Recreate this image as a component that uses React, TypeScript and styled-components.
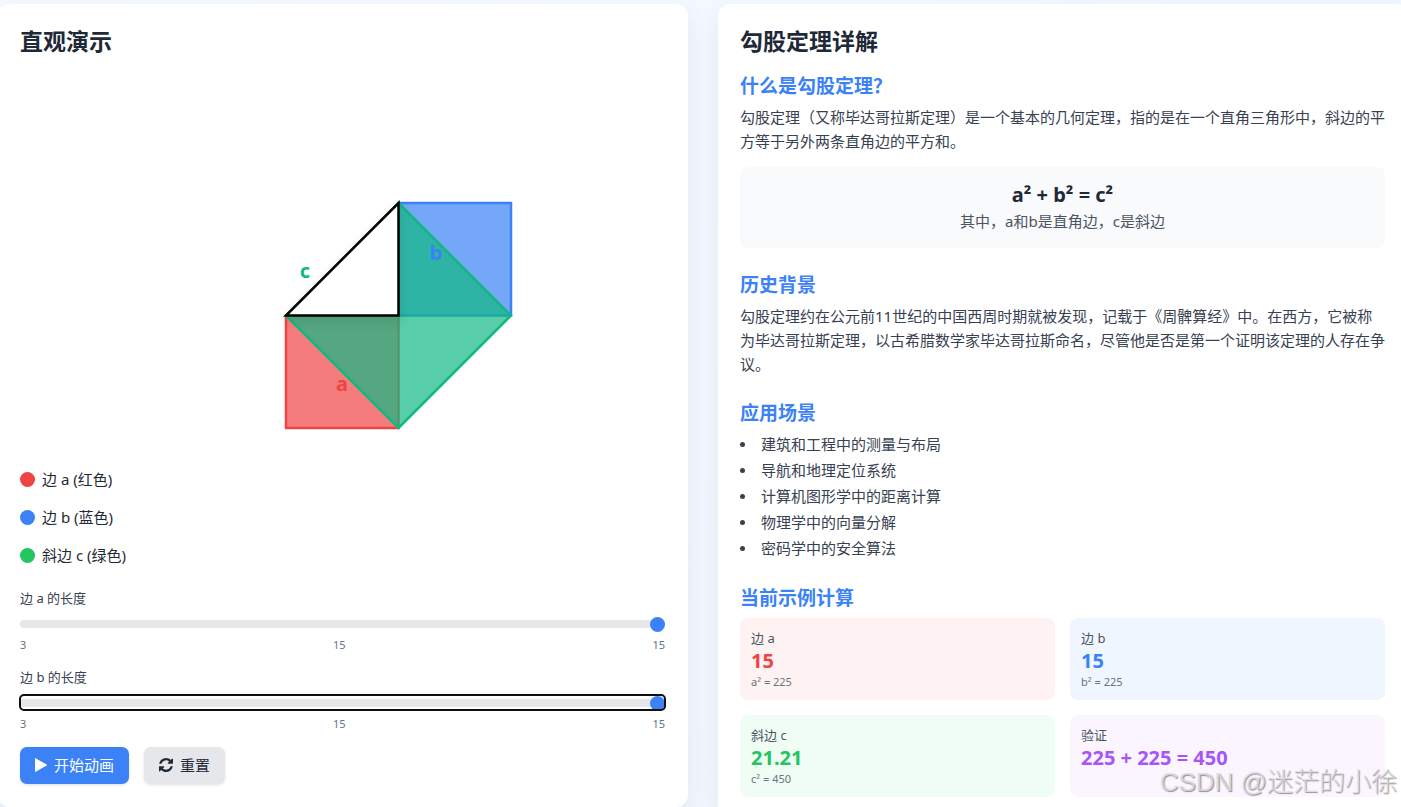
import React, { useState } from "react";
import styled, { createGlobalStyle } from "styled-components";

const GlobalStyle = createGlobalStyle`
  * { box-sizing: border-box; }
  body {
    margin: 0;
    overflow-x: hidden;
    color: #1f2937;
    font-family: "Noto Sans", "Noto Sans CJK SC", sans-serif;
    font-size: 15px;
    line-height: 22px;
  }
  h2, h3, p, ul { margin: 0; padding: 0; }
`;

const Page = styled.main`
  position: relative;
  min-height: 100vh;
  overflow: hidden;
  padding-top: 4px;
  background: linear-gradient(135deg, #f5f9ff, #f1f5fe);
`;

const Columns = styled.div`
  display: grid;
  grid-template-columns: 1fr 1fr;
  gap: 30px;
  margin: 0 -7px 0 -2px;
`;

const Card = styled.section<{ $open?: boolean }>`
  min-width: 0;
  background: #fff;
  border-radius: ${(p) => (p.$open ? "12px 12px 0 0" : "12px")};
  padding: ${(p) => (p.$open ? "21px 23px 9px 22px" : "21px 23px 23px 22px")};
  box-shadow: 0 10px 24px rgba(30, 60, 90, 0.08);
`;

const Title = styled.h2`
  margin-bottom: 15px;
  font-size: 23px;
  line-height: 32px;
  font-weight: 700;
`;

const Diagram = styled.svg`
  display: block;
  width: 100%;
  height: 374px;
  margin-bottom: 22px;
`;

const SideLabel = styled.text`
  font-size: 20px;
  font-weight: 700;
  text-anchor: middle;
`;

const Shape = styled.path`
  filter: drop-shadow(0 4px 6px rgba(0, 0, 0, 0.1));
`;

const Legend = styled.ul`
  display: grid;
  gap: 16px;
  margin-bottom: 22px;
  list-style: none;
`;

const LegendItem = styled.li<{ $color: string }>`
  display: flex;
  align-items: center;
  gap: 7px;
  &::before {
    content: "";
    width: 15px;
    height: 15px;
    border-radius: 50%;
    background: ${(p) => p.$color};
  }
`;

const Field = styled.div`
  margin-bottom: 15px;
`;

const FieldLabel = styled.label`
  display: block;
  margin-bottom: 8px;
  color: #374151;
  font-size: 13px;
  line-height: 20px;
`;

const Range = styled.input<{ $active?: boolean }>`
  appearance: none;
  display: block;
  width: 100%;
  height: 15px;
  margin: 0 0 6px;
  background: transparent;
  border-radius: 4px;
  outline: ${(p) => (p.$active ? "2px solid #101010" : "none")};
  outline-offset: -1px;
  &::-webkit-slider-runnable-track {
    height: 8px;
    border-radius: 4px;
    background: #e5e7eb;
  }
  &::-webkit-slider-thumb {
    appearance: none;
    width: 15px;
    height: 15px;
    margin-top: -3px;
    border-radius: 50%;
    background: #3b82f6;
  }
`;

const Ticks = styled.div`
  display: flex;
  justify-content: space-between;
  color: #6b7280;
  font-size: 11px;
  line-height: 15px;
`;

const Actions = styled.div`
  display: flex;
  gap: 15px;
  margin-top: 16px;
`;

const Button = styled.button<{ $primary?: boolean }>`
  display: flex;
  align-items: center;
  gap: 7px;
  height: 37px;
  padding: 0 15px 2px;
  border: 0;
  border-radius: 7px;
  font: inherit;
  color: ${(p) => (p.$primary ? "#fff" : "#1f2937")};
  background: ${(p) => (p.$primary ? "#3b82f6" : "#e5e7eb")};
  box-shadow: 0 1px 3px rgba(0, 0, 0, 0.12);
`;

const Topic = styled.section`
  & + & { margin-top: 23px; }
`;

const TopicTitle = styled.h3`
  margin-bottom: 5px;
  color: #3b82f6;
  font-size: 19px;
  line-height: 28px;
  font-weight: 700;
`;

const Text = styled.p`
  color: #374151;
  line-height: 24px;
`;

const Formula = styled.div`
  margin-top: 14px;
  padding: 14px 15px 13px;
  border-radius: 8px;
  background: #f8fafc;
  text-align: center;
  line-height: 27px;
  color: #4b5563;
`;

const Equation = styled.p`
  color: #1f2937;
  font-size: 20px;
  font-weight: 700;
`;

const Uses = styled.ul`
  display: grid;
  gap: 4px;
  padding: 1px 0 2px;
  color: #374151;
  list-style: none;
`;

const Use = styled.li`
  display: flex;
  align-items: center;
  gap: 16px;
  &::before {
    content: "";
    width: 5px;
    height: 5px;
    border-radius: 50%;
    background: currentColor;
  }
`;

const Results = styled.div`
  display: grid;
  grid-template-columns: 1fr 1fr;
  gap: 15px;
  padding-top: 1px;
`;

const Result = styled.div<{ $bg: string }>`
  min-height: 82px;
  padding: 11px;
  border-radius: 8px;
  background: ${(p) => p.$bg};
`;

const ResultName = styled.p`
  color: #4b5563;
  font-size: 13px;
  line-height: 18px;
`;

const ResultValue = styled.p<{ $color: string }>`
  color: ${(p) => p.$color};
  font-size: 20px;
  line-height: 27px;
  font-weight: 700;
`;

const ResultNote = styled.p`
  color: #6b7280;
  font-size: 11px;
  line-height: 15px;
`;

const Watermark = styled.div`
  position: absolute;
  right: 4px;
  bottom: 5px;
  color: rgba(220, 220, 224, 0.85);
  font-family: "Liberation Sans", "Noto Sans CJK SC", sans-serif;
  font-size: 26px;
  font-weight: 300;
  line-height: 40px;
  text-shadow: 1px 1px 1px rgba(120, 120, 120, 0.8);
  pointer-events: none;
`;

const PlayIcon = () => (
  <svg width="12" height="14" viewBox="0 0 12 14" fill="currentColor" aria-hidden="true">
    <path d="M0 .5v13c0 .4.2.5.6.3L11.7 7.400c.4-.2.4-.6 0-.8L.6.2C.2 0 0 .1 0 .5z" />
  </svg>
);

const ResetIcon = () => (
  <svg width="14" height="14" viewBox="0 0 1536 1536" fill="currentColor" aria-hidden="true">
    <path d="M1511 928q0 5-1 7-64 268-268 434.500T764 1536q-146 0-282.500-55T238 1324l-129 129q-19 19-45 19t-45-19-19-45V960q0-26 19-45t45-19h448q26 0 45 19t19 45-19 45l-137 137q71 66 161 102t187 36q134 0 250-65t186-179q11-17 53-117 8-23 30-23h192q13 0 22.500 9.500t9.500 22.500zm25-800v448q0 26-19 45t-45 19h-448q-26 0-45-19t-19-45 19-45l138-138Q969 256 768 256q-134 0-250 65T332 500q-11 17-53 117-8 23-30 23H50q-13 0-22.500-9.500T18 608v-7q65-268 270-434.500T768 0q146 0 284 55.500T1297 212l130-129q19-19 45-19t45 19 19 45z" />
  </svg>
);

function SideField({ id, name, active }: { id: string; name: string; active?: boolean }) {
  const [value, setValue] = useState(15);
  return (
    <Field>
      <FieldLabel htmlFor={id}>{name} 的长度</FieldLabel>
      <Range
        id={id}
        type="range"
        min={3}
        max={15}
        value={value}
        $active={active}
        onChange={(e) => setValue(Number(e.target.value))}
      />
      <Ticks>
        <span>3</span>
        <span>{value}</span>
        <span>15</span>
      </Ticks>
    </Field>
  );
}

const uses = [
  "建筑和工程中的测量与布局",
  "导航和地理定位系统",
  "计算机图形学中的距离计算",
  "物理学中的向量分解",
  "密码学中的安全算法",
];

const results = [
  { name: "边 a", value: "15", note: "a² = 225", color: "#ef4444", bg: "#fef2f2" },
  { name: "边 b", value: "15", note: "b² = 225", color: "#3b82f6", bg: "#eff6ff" },
  { name: "斜边 c", value: "21.21", note: "c² = 450", color: "#22c55e", bg: "#f0fdf4" },
  { name: "验证", value: "225 + 225 = 450", note: "", color: "#a855f7", bg: "#faf5ff" },
];

export default function App() {
  return (
    <Page lang="zh-CN">
      <GlobalStyle />
      <Columns>
        <Card>
          <Title>直观演示</Title>
          <Diagram viewBox="0 1 645 374" role="img" aria-label="勾股定理图形">
            <g strokeWidth="2.5" fillOpacity="0.7">
              <rect x="266" y="244.500" width="112.500" height="112.500" fill="#ef4444" stroke="#ef4444" />
              <rect x="378.500" y="132" width="112.500" height="112.500" fill="#3b82f6" stroke="#3b82f6" />
              <path d="M378.500 132L491 244.500L378.500 357L266 244.500Z" fill="#10b981" stroke="#10b981" />
            </g>
            <Shape d="M266 244.500H378.500V132Z" fill="#fff" stroke="#000" strokeWidth="2.5" />
            <SideLabel x="322" y="320" fill="#ef4444">a</SideLabel>
            <SideLabel x="416" y="189" fill="#3b82f6">b</SideLabel>
            <SideLabel x="285" y="207" fill="#10b981">c</SideLabel>
          </Diagram>
          <Legend>
            <LegendItem $color="#ef4444">边 a (红色)</LegendItem>
            <LegendItem $color="#3b82f6">边 b (蓝色)</LegendItem>
            <LegendItem $color="#22c55e">斜边 c (绿色)</LegendItem>
          </Legend>
          <SideField id="side-a" name="边 a" />
          <SideField id="side-b" name="边 b" active />
          <Actions>
            <Button type="button" $primary><PlayIcon />开始动画</Button>
            <Button type="button"><ResetIcon />重置</Button>
          </Actions>
        </Card>
        <Card $open>
          <Title>勾股定理详解</Title>
          <Topic>
            <TopicTitle>什么是勾股定理？</TopicTitle>
            <Text>勾股定理（又称毕达哥拉斯定理）是一个基本的几何定理，指的是在一个直角三角形中，斜边的平方等于另外两条直角边的平方和。</Text>
            <Formula>
              <Equation>a² + b² = c²</Equation>
              <p>其中，a和b是直角边，c是斜边</p>
            </Formula>
          </Topic>
          <Topic>
            <TopicTitle>历史背景</TopicTitle>
            <Text>勾股定理约在公元前11世纪的中国西周时期就被发现，记载于《周髀算经》中。在西方，它被称为毕达哥拉斯定理，以古希腊数学家毕达哥拉斯命名，尽管他是否是第一个证明该定理的人存在争议。</Text>
          </Topic>
          <Topic>
            <TopicTitle>应用场景</TopicTitle>
            <Uses>
              {uses.map((u) => <Use key={u}>{u}</Use>)}
            </Uses>
          </Topic>
          <Topic>
            <TopicTitle>当前示例计算</TopicTitle>
            <Results>
              {results.map((r) => (
                <Result key={r.name} $bg={r.bg}>
                  <ResultName>{r.name}</ResultName>
                  <ResultValue $color={r.color}>{r.value}</ResultValue>
                  {r.note && <ResultNote>{r.note}</ResultNote>}
                </Result>
              ))}
            </Results>
          </Topic>
        </Card>
      </Columns>
      <Watermark>CSDN @迷茫的小徐</Watermark>
    </Page>
  );
}
